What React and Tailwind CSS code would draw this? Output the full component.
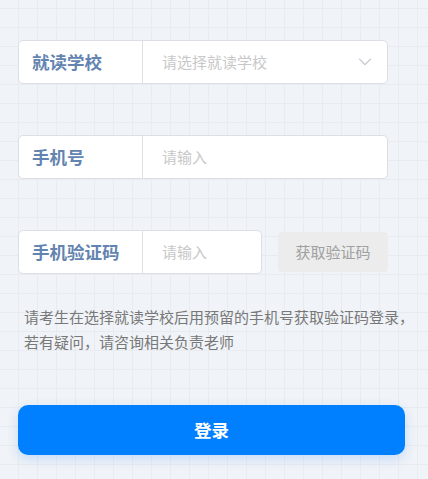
import React from "react";

function Chevron() {
  return (
    <svg width="14" height="8" viewBox="0 0 14 8" fill="none" className="shrink-0">
      <path d="M1.5 1.2l5.5 5.5 5.5-5.5" stroke="#c0c4cc" strokeWidth="1.2" strokeLinecap="round" strokeLinejoin="round" />
    </svg>
  );
}

function Field({ label, placeholder, width = "w-[370px]", right }) {
  return (
    <div className={`${width} h-[44px] flex bg-white border border-[#dcdfe6] rounded-[5px]`}>
      <div className="w-[124px] shrink-0 flex items-center pl-[13px] border-r border-[#dcdfe6] text-[17.5px] font-bold text-[#6384b0]">
        {label}
      </div>
      <div className="flex-1 flex items-center pl-[19px] pr-[15px] text-[15px] text-[#c8c8c8]">
        <span className="flex-1">{placeholder}</span>
        {right}
      </div>
    </div>
  );
}

export default function App() {
  return (
    <div
      className="min-h-screen w-full bg-[#f0f3f7] bg-[linear-gradient(to_right,#e8ecf0_1px,transparent_1px),linear-gradient(to_bottom,#e8ecf0_1px,transparent_1px)] bg-[size:19px_19px] bg-[position:18px_8px] px-[18px] pt-[40px] pb-[24px]"
      style={{ fontFamily: '"Noto Sans CJK SC", "Noto Sans", sans-serif' }}
    >
      <Field label="就读学校" placeholder="请选择就读学校" right={<Chevron />} />
      <div className="mt-[51px]">
        <Field label="手机号" placeholder="请输入" />
      </div>
      <div className="mt-[51px] flex items-center gap-[16px]">
        <Field label="手机验证码" placeholder="请输入" width="w-[244px]" />
        <div className="w-[110px] h-[40px] flex items-center justify-center bg-[#ececec] rounded-[4px] text-[15px] text-[#a0a0a0]">
          获取验证码
        </div>
      </div>
      <p className="mt-[30px] ml-[6px] w-[394px] text-[15px] leading-[25px] text-[#787878]">
        请考生在选择就读学校后用预留的手机号获取验证码登录，若有疑问，请咨询相关负责老师
      </p>
      <button className="mt-[51px] w-[387px] h-[50px] flex items-center justify-center bg-[#0080ff] rounded-[10px] text-white text-[17.5px] font-bold shadow-[0_4px_12px_rgba(0,110,255,0.18)]">
        登录
      </button>
    </div>
  );
}
